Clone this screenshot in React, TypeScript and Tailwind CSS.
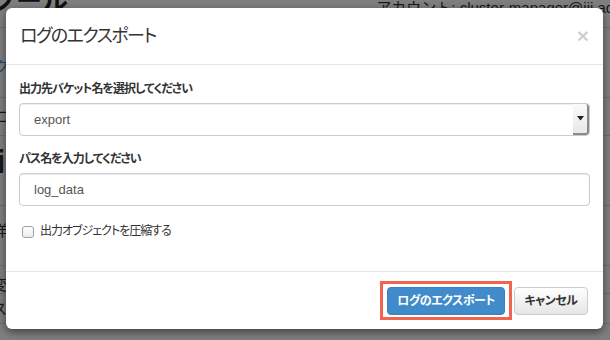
import React from "react";

const font = { fontFamily: '"Liberation Sans", "Noto Sans CJK JP", sans-serif' };

export default function App() {
  return (
    <div
      className="relative w-[610px] h-[340px] overflow-hidden bg-white text-[#333]"
      style={font}
    >
      {/* page behind the modal */}
      <div className="flex flex-col">
        <div className="flex justify-between items-start h-[28px] border-b border-[#ddd]">
          <div className="text-[26px] font-bold leading-none -mt-[12px] -ml-[10px] text-[#222]">ツール</div>
          <div className="text-[15px] leading-none mt-[0px] mr-[-20px] whitespace-nowrap">
            アカウント: cluster-manager@iii.ad.jp
          </div>
        </div>
        <div className="h-[70px] border-b border-[#ddd] pt-[28px] -ml-[6px] text-[15px] text-[#428bca]">クラスタ</div>
        <div className="h-[38px] border-b border-[#ddd] pt-[8px] -ml-[4px] text-[15px]">ログ</div>
        <div className="h-[70px] border-b border-[#ddd] pt-[8px] -ml-[4px] text-[34px] font-bold leading-none">i</div>
        <div className="h-[60px] border-b border-[#ddd] pt-[14px] -ml-[8px] text-[15px]">詳細</div>
        <div className="h-[28px] border-b border-[#ddd] pt-[8px] -ml-[8px] text-[15px]">変更</div>
        <div className="h-[30px] border-b border-[#ddd] pt-[4px] -ml-[8px] text-[15px]">ステータス</div>
      </div>

      {/* backdrop */}
      <div className="absolute inset-0 bg-black/50" />

      {/* modal */}
      <div className="absolute left-[6px] top-[8px] w-[597px] rounded-[6px] bg-white shadow-[0_3px_9px_rgba(0,0,0,0.5)]">
        <div className="flex items-center justify-between px-[14px] py-[15px] border-b border-[#e5e5e5]">
          <h4 className="text-[18px] leading-[26px] font-normal text-[#333] tracking-[-1.5px] [font-feature-settings:'palt']">
            ログのエクスポート
          </h4>
          <span className="text-[21px] font-bold leading-none text-black/20 mr-[0px] -mt-[2px]">×</span>
        </div>

        <div className="px-[13px] pt-[15px] pb-[30px]">
          <label className="block text-[12px] leading-[19px] font-bold mb-[4px] tracking-[-1px] [font-feature-settings:'palt']">
            出力先バケット名を選択してください
          </label>
          <div className="flex h-[33px] rounded-[4px] border border-[#ccc] shadow-[inset_0_1px_1px_rgba(0,0,0,0.075)] mb-[14px] overflow-hidden">
            <div className="flex-1 flex items-center pl-[14px] text-[13px] text-[#555]">export</div>
            <div className="w-[16px] flex items-center justify-center bg-gradient-to-b from-[#fafafa] to-[#e8e8e8] border-r-[2px] border-b-[2px] border-[#8a8a8a] rounded-r-[3px]">
              <svg width="7" height="5" viewBox="0 0 7 5">
                <path d="M0 0 L7 0 L3.5 4.5 Z" fill="#222" />
              </svg>
            </div>
          </div>

          <label className="block text-[12px] leading-[19px] font-bold mb-[4px] tracking-[-1px] [font-feature-settings:'palt']">
            パス名を入力してください
          </label>
          <div className="flex items-center h-[33px] rounded-[4px] border border-[#ccc] shadow-[inset_0_1px_1px_rgba(0,0,0,0.075)] pl-[14px] text-[13px] text-[#555]">
            log_data
          </div>

          <div className="flex items-center mt-[15px] h-[20px]">
            <span className="ml-[3px] w-[12px] h-[12px] rounded-[3px] border border-[#a0a0a0] bg-gradient-to-b from-white to-[#ececec] mt-[2px]" />
            <span className="ml-[6px] text-[12px] leading-[20px] tracking-[-1px] [font-feature-settings:'palt']">出力オブジェクトを圧縮する</span>
          </div>
        </div>

        <div className="flex justify-end items-center px-[15px] pt-[15px] pb-[14px] border-t border-[#e5e5e5]">
          <div className="relative">
            <div className="absolute left-[-7px] right-[-7px] top-[-6px] bottom-[-5px] border-[3px] border-[#f2644d]" />
            <button className="relative h-[28px] w-[118px] rounded-[4px] bg-[#428bca] border border-[#3a80bd] text-white text-[12px] font-bold tracking-[-0.5px] [font-feature-settings:'palt']">
              ログのエクスポート
            </button>
          </div>
          <button className="ml-[9px] h-[28px] w-[74px] rounded-[4px] bg-gradient-to-b from-white to-[#e6e6e6] border border-[#ccc] text-[#333] text-[12px] font-bold tracking-[-0.5px] [font-feature-settings:'palt']">
            キャンセル
          </button>
        </div>
      </div>
    </div>
  );
}
